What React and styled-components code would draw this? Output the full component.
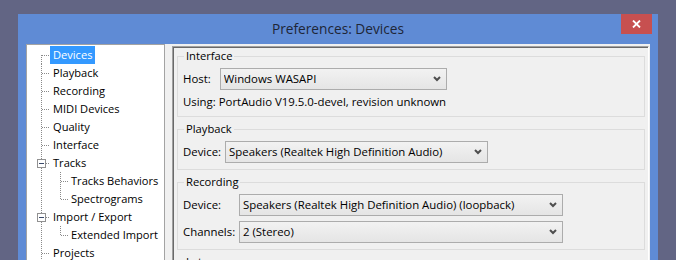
import React from 'react';
import styled, { createGlobalStyle } from 'styled-components';

const Global = createGlobalStyle`
  html, body { margin: 0; padding: 0; background: #626584; overflow: hidden; }
  body { font-family: "Open Sans", "Noto Sans", sans-serif; font-size: 11px; color: #000; }
  * { box-sizing: border-box; }
`;

const Desktop = styled.div`
  width: 676px;
  height: 260px;
  padding: 14px 0 0 18px;
  overflow: hidden;
`;

const Window = styled.div`
  width: 640px;
  height: 300px;
  background: #5f8bd5;
  padding: 0 8px;
  display: flex;
  flex-direction: column;
`;

const TitleBar = styled.div`
  height: 30px;
  display: grid;
  grid-template-columns: 1fr auto 1fr;
  align-items: center;
`;

const Title = styled.div`
  grid-column: 2;
  font-size: 13.7px;
  color: #1e2637;
  line-height: 30px;
`;

const CloseButton = styled.div`
  grid-column: 3;
  justify-self: end;
  align-self: start;
  width: 31px;
  height: 20px;
  margin-right: -2px;
  background: #c75050;
  display: flex;
  align-items: center;
  justify-content: center;
`;

const Client = styled.div`
  flex: 1;
  background: #f0f0f0;
  display: flex;
  align-items: stretch;
`;

const TreePanel = styled.div`
  width: 139px;
  flex: none;
  background: #fff;
  border: 1px solid #a3a3a3;
  padding-top: 1px;
  display: flex;
  flex-direction: column;
  font-size: 11.1px;
`;

const TreeRow = styled.div`
  height: 18px;
  display: flex;
  align-items: stretch;
  flex: none;
`;

const TreeLabel = styled.span`
  padding: 0 3px;
  line-height: 18px;
  white-space: nowrap;
  background: ${p => (p.$selected ? '#3399ff' : 'transparent')};
  color: ${p => (p.$selected ? '#fff' : '#000')};
`;

const RightPanel = styled.div`
  flex: 1;
  margin: 2px 1px 0 7px;
  border-top: 1px solid #a0a0a0;
  border-left: 1px solid #a0a0a0;
  border-right: 1px solid #fff;
  box-shadow: inset 1px 1px 0 #696969;
  padding: 1px 3px 0 4px;
  display: flex;
  flex-direction: column;
  gap: 4px;
  font-size: 11.4px;
`;

const Group = styled.fieldset`
  margin: 0;
  border: 1px solid #dcdcdc;
  padding: 4px 6px 6px 5px;
  display: flex;
  flex-direction: column;
  gap: ${p => p.$gap || 4}px;
  min-width: 0;
`;

const Legend = styled.legend`
  padding: 0 2px;
  margin-left: 1px;
  line-height: 16px;
  font-size: 11.2px;
`;

const Row = styled.div`
  display: flex;
  align-items: center;
`;

const FieldLabel = styled.span`
  line-height: 16px;
  margin-right: ${p => (p.$gap === undefined ? 5 : p.$gap)}px;
  white-space: nowrap;
`;

const Text = styled.div`
  line-height: 16px;
`;

const FieldGrid = styled.div`
  display: grid;
  grid-template-columns: ${p => p.$labelW}px auto;
  justify-content: start;
  align-items: center;
  row-gap: 5px;
`;

const Choice = styled.div`
  width: ${p => p.$w}px;
  height: 22px;
  border: 1px solid #acacac;
  background: linear-gradient(#f2f2f2, #e5e5e5);
  display: flex;
  align-items: center;
  padding: 0 5px 0 3px;
  white-space: nowrap;
  line-height: 16px;
`;

const ChoiceText = styled.span`
  flex: 1;
  overflow: hidden;
`;

function Chevron() {
  return (
    <svg width="8" height="6" viewBox="0 0 8 6">
      <polyline points="1,1 4,4 7,1" fill="none" stroke="#4e4e4e" strokeWidth="2" />
    </svg>
  );
}

function Select({ w, children }) {
  return (
    <Choice $w={w}>
      <ChoiceText>{children}</ChoiceText>
      <Chevron />
    </Choice>
  );
}

const DOT = '#8a8a8a';

function Guide({ level, first, last, expander, parentContinues = true }) {
  const width = level === 1 ? 23 : 41;
  return (
    <svg width={width} height="18" viewBox={`0 0 ${width} 18`} shapeRendering="crispEdges" style={{ flex: 'none' }}>
      {level === 1 && !expander && (
        <>
          <line x1="14.5" y1={first ? 9 : 0} x2="14.5" y2={last ? 10 : 18} stroke={DOT} strokeDasharray="1 1" />
          <line x1="15" y1="9.5" x2="23" y2="9.5" stroke={DOT} strokeDasharray="1 1" />
        </>
      )}
      {level === 1 && expander && (
        <>
          <line x1="14.5" y1="0" x2="14.5" y2="5" stroke={DOT} strokeDasharray="1 1" />
          <line x1="14.5" y1="14" x2="14.5" y2="18" stroke={DOT} strokeDasharray="1 1" />
          <line x1="19" y1="9.5" x2="23" y2="9.5" stroke={DOT} strokeDasharray="1 1" />
          <rect x="10.5" y="5.5" width="8" height="8" fill="#fff" stroke="#919191" />
          <line x1="12" y1="9.5" x2="17" y2="9.5" stroke="#3b4a6b" />
        </>
      )}
      {level === 2 && (
        <>
          {parentContinues && <line x1="14.5" y1="0" x2="14.5" y2="18" stroke={DOT} strokeDasharray="1 1" />}
          <line x1="33.5" y1="0" x2="33.5" y2={last ? 10 : 18} stroke={DOT} strokeDasharray="1 1" />
          <line x1="34" y1="9.5" x2="41" y2="9.5" stroke={DOT} strokeDasharray="1 1" />
        </>
      )}
    </svg>
  );
}

const items = [
  { label: 'Devices', level: 1, first: true, selected: true },
  { label: 'Playback', level: 1 },
  { label: 'Recording', level: 1 },
  { label: 'MIDI Devices', level: 1 },
  { label: 'Quality', level: 1 },
  { label: 'Interface', level: 1 },
  { label: 'Tracks', level: 1, expander: true },
  { label: 'Tracks Behaviors', level: 2 },
  { label: 'Spectrograms', level: 2, last: true },
  { label: 'Import / Export', level: 1, expander: true },
  { label: 'Extended Import', level: 2, last: true },
  { label: 'Projects', level: 1 },
];

export default function App() {
  return (
    <>
      <Global />
      <Desktop>
        <Window>
          <TitleBar>
            <Title>Preferences: Devices</Title>
            <CloseButton>
              <svg width="9" height="8" viewBox="0 0 9 8">
                <path d="M1 0.5 L8 7.5 M8 0.5 L1 7.5" stroke="#fff" strokeWidth="1.8" fill="none" />
              </svg>
            </CloseButton>
          </TitleBar>
          <Client>
            <TreePanel>
              {items.map(it => (
                <TreeRow key={it.label}>
                  <Guide level={it.level} first={it.first} last={it.last} expander={it.expander} />
                  <TreeLabel $selected={it.selected}>{it.label}</TreeLabel>
                </TreeRow>
              ))}
            </TreePanel>
            <RightPanel>
              <Group>
                <Legend>Interface</Legend>
                <Row>
                  <FieldLabel $gap={9}>Host:</FieldLabel>
                  <Select w={227}>Windows WASAPI</Select>
                </Row>
                <Text>Using: PortAudio V19.5.0-devel, revision unknown</Text>
              </Group>
              <Group>
                <Legend>Playback</Legend>
                <Row>
                  <FieldLabel $gap={4}>Device:</FieldLabel>
                  <Select w={263}>Speakers (Realtek High Definition Audio)</Select>
                </Row>
              </Group>
              <Group $gap={5}>
                <Legend>Recording</Legend>
                <FieldGrid $labelW={56}>
                  <FieldLabel $gap={0}>Device:</FieldLabel>
                  <Select w={324}>Speakers (Realtek High Definition Audio) (loopback)</Select>
                  <FieldLabel $gap={0}>Channels:</FieldLabel>
                  <Select w={324}>2 (Stereo)</Select>
                </FieldGrid>
              </Group>
              <Group>
                <Legend>Latency</Legend>
              </Group>
            </RightPanel>
          </Client>
        </Window>
      </Desktop>
    </>
  );
}
